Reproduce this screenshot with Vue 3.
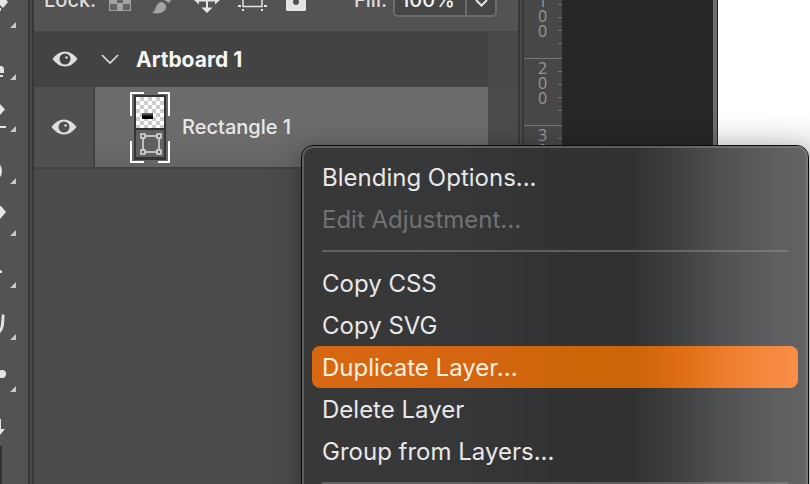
<script setup>
import { ref } from 'vue'

const tools = [
  { name: 'Select', d: 'M-3 26L3 20L8 26L3 32L-1 28ZM-1 32H1V35H-1Z' },
  { name: 'Lasso', d: 'M-2 38H1Q4 38 4 42V45H0V42H-2ZM-2 47H3V49H-2Z' },
  { name: 'Crop', d: 'M-5 29L0 24L5 29.500L0 35ZM-1 46H6V48H-1Z' },
  { name: 'Heal', d: 'M-1 32Q2 34 2 39Q2 44 -1 46V43Q0 39 -1 36Z' },
  { name: 'Eraser', d: 'M-1 22L1 22L6 28L0 35H-1Z' },
  { name: 'Pen', d: 'M-1 33L2 35V37H-1Z' },
  { name: 'Blur', d: 'M2 26L4.500 27L4 37Q3 43 -1 46V42Q1 39 1 36Z' },
  { name: 'Path', d: 'M-2 34A4 4 0 1 1 6 34A4 4 0 1 1 -2 34Z' },
  { name: 'Move', d: 'M-1 27H1V37H5L0 43H-1Z' },
]
const marks = ['100', '200', '300']
const upper = [
  { text: 'Blending Options...' },
  { text: 'Edit Adjustment...', disabled: true },
]
const lower = ['Copy CSS', 'Copy SVG', 'Duplicate Layer...', 'Delete Layer', 'Group from Layers...']
const active = ref('Duplicate Layer...')
const fill = ref('100%')
</script>

<template>
  <main class="app">
    <nav class="tools" aria-label="Tools">
      <button v-for="(t, i) in tools" :key="t.name" class="tool" :aria-label="t.name">
        <svg width="28" height="52" viewBox="0 0 28 52">
          <path :d="t.d" fill="#e4e4e4" />
          <path v-if="i < 8" d="M16 46V52H10Z" fill="#c8c8c8" />
        </svg>
      </button>
      <span class="swatch"></span>
    </nav>
    <div class="divider"></div>

    <section class="panel">
      <header class="lockbar">
        <div class="lockrow">
          <span class="lock-label">Lock:</span>
          <div class="locks">
            <button aria-label="Lock transparent pixels">
              <svg width="28" height="32" viewBox="0 0 28 32">
                <rect x="3" y="5" width="22" height="22" fill="#a3a3a3" />
                <path d="M11 6H17V12H11ZM4 12H11V19H4ZM17 12H24V19H17ZM11 19H17V26H11Z" fill="#a3a3a3" />
                <path d="M4 6H11V12H4ZM17 6H24V12H17ZM11 12H17V19H11ZM4 20H11V26H4ZM17 20H24V26H17Z" fill="#636363" />
              </svg>
            </button>
            <button aria-label="Lock image pixels">
              <svg width="28" height="32" viewBox="0 0 28 32">
                <path d="M2 29Q5 27 6 23Q8 18 12 18Q17 20 16 24Q14 31 2 29Z" fill="#a3a3a3" />
                <path d="M14 16L24 3L28 7L19 19Z" fill="#a3a3a3" />
              </svg>
            </button>
            <button aria-label="Lock position">
              <svg width="28" height="32" viewBox="0 0 28 32">
                <path d="M13 3L18 8H14V15H21V11L26 16L21 20.500V17.500H14V23.500H18.500L13 29L7.500 23.500H12V17.500H5V20.500L0 16L5 11V15H12V8H8Z" fill="#e4e4e4" />
              </svg>
            </button>
            <button aria-label="Lock artboard nesting">
              <svg width="30" height="32" viewBox="0 0 30 32">
                <path d="M5 4V22.500H24V4" fill="none" stroke="#e4e4e4" stroke-width="1.500" />
                <path d="M0 21H3V23H0ZM26 21H29V23H26ZM4 25H6V27H4ZM23 25H25V27H23Z" fill="#e4e4e4" />
              </svg>
            </button>
            <button aria-label="Lock all">
              <svg width="28" height="32" viewBox="0 0 28 32">
                <path d="M6 12V7Q12 0 18 7V12" fill="none" stroke="#e4e4e4" stroke-width="3" />
                <rect x="2" y="11" width="20" height="16" rx="1.500" fill="#e4e4e4" />
                <circle cx="12" cy="18" r="3" fill="#535353" />
              </svg>
            </button>
          </div>
          <label class="fill-label" for="fill">Fill:</label>
          <div class="combo">
            <input id="fill" v-model="fill" />
            <button aria-label="Fill options">
              <svg width="28" height="29" viewBox="0 0 28 29">
                <path d="M9 14L14.500 19.500L20 14" fill="none" stroke="#e4e4e4" stroke-width="2" />
              </svg>
            </button>
          </div>
        </div>
      </header>

      <div class="layers">
        <div class="layer group">
          <button class="eye" aria-label="Toggle Artboard 1">
            <svg width="26" height="16" viewBox="0 0 26 16">
              <path d="M0.500 8Q6 0.500 13 0.500Q20 0.500 25.500 8Q20 15.500 13 15.500Q6 15.500 0.500 8Z" fill="#dedede" />
              <circle cx="13" cy="8" r="5.500" fill="#434343" />
              <circle cx="14.500" cy="6.500" r="1.200" fill="#dedede" />
            </svg>
          </button>
          <div class="body">
            <button class="chevron" aria-label="Collapse">
              <svg width="18" height="12" viewBox="0 0 18 12">
                <path d="M1 2L9 10L17 2" fill="none" stroke="#dedede" stroke-width="1.600" />
              </svg>
            </button>
            <strong>Artboard 1</strong>
          </div>
        </div>
        <div class="layer shape">
          <button class="eye" aria-label="Toggle Rectangle 1">
            <svg width="26" height="16" viewBox="0 0 26 16">
              <path d="M0.500 8Q6 0.500 13 0.500Q20 0.500 25.500 8Q20 15.500 13 15.500Q6 15.500 0.500 8Z" fill="#dedede" />
              <circle cx="13" cy="8" r="5.500" fill="#505050" />
              <circle cx="14.500" cy="6.500" r="1.200" fill="#dedede" />
            </svg>
          </button>
          <div class="body selected">
            <svg width="40" height="72" viewBox="0 0 40 72">
              <defs>
                <pattern id="check" x="6" y="6" width="8" height="8" patternUnits="userSpaceOnUse">
                  <rect width="8" height="8" fill="#fff" />
                  <path d="M4 0H8V4H4ZM0 4H4V8H0Z" fill="#ccc" />
                </pattern>
                <linearGradient id="bar" x2="0" y2="1">
                  <stop offset="0" stop-color="#777" />
                  <stop offset=".6" stop-color="#000" />
                </linearGradient>
              </defs>
              <rect x="4" y="4" width="32" height="65" fill="#333" />
              <rect x="6" y="6" width="28" height="31" fill="url(#check)" />
              <rect x="12" y="22" width="11" height="6" fill="url(#bar)" />
              <rect x="6" y="39" width="28" height="27" fill="#606060" />
              <path d="M13 45H29M13 61H29M13 45V60M29 45V60" stroke="#ddd" stroke-width="1.500" />
              <path d="M11 43H15V47H11ZM27 43H31V47H27ZM11 59H15V63H11ZM27 59H31V63H27Z" fill="#606060" stroke="#ddd" stroke-width="1.500" />
              <path d="M1 25V2H14M28 2H39V25M1 50V71H14M28 71H39V50" fill="none" stroke="#fff" stroke-width="2" />
            </svg>
            <span>Rectangle 1</span>
          </div>
        </div>
      </div>
    </section>
    <div class="divider"></div>

    <aside class="ruler" aria-label="Ruler">
      <div v-for="m in marks" :key="m" class="mark">
        <div class="digits"><span v-for="(n, i) in m" :key="i">{{ n }}</span></div>
        <div class="ticks"><i></i><i></i><i></i><i></i></div>
      </div>
    </aside>
    <div class="canvas"></div>
    <div class="page"></div>

    <div class="menu" role="menu">
      <button v-for="m in upper" :key="m.text" role="menuitem" :disabled="m.disabled">{{ m.text }}</button>
      <hr />
      <button v-for="m in lower" :key="m" role="menuitem" :class="{ active: m === active }" @mouseenter="active = m">{{ m }}</button>
      <hr />
    </div>
  </main>
</template>

<style>
body { margin: 0; }
</style>

<style scoped>
* { box-sizing: border-box; }
.app {
  position: relative;
  display: flex;
  height: 100vh;
  overflow: hidden;
  background: #fff;
  color: #e8e8e8;
  font-family: Inter, "Liberation Sans", sans-serif;
  font-size: 20px;
}
button {
  padding: 0;
  border: 0;
  background: none;
  color: inherit;
  font: inherit;
}
svg { display: block; flex: none; }
.tools {
  flex: none;
  width: 28px;
  margin-top: -24px;
  background: #535353;
}
.tool { display: block; height: 52px; }
.swatch {
  display: block;
  width: 2px;
  height: 48px;
  margin-top: 2px;
  background: #303030;
}
.divider {
  flex: none;
  width: 6px;
  background: #4b4b4b;
  border: solid #373737;
  border-width: 0 2px;
}
.panel {
  flex: none;
  width: 484px;
  background: #4b4b4b;
  font-weight: 500;
}
.lockbar {
  height: 32px;
  background: #535353;
  border-bottom: 1px solid #464646;
}
.lockrow {
  display: flex;
  align-items: center;
  height: 32px;
  padding: 0 21px 0 10px;
  transform: translateY(-16px);
  color: #dcdcdc;
}
.lock-label { width: 62px; }
.locks { display: flex; gap: 16px; }
.fill-label { margin-left: auto; margin-right: 6px; }
.combo {
  display: flex;
  width: 104px;
  height: 33px;
  border: 2px solid #6c6c6c;
  border-radius: 5px;
  background: #464646;
}
.combo input {
  flex: 1;
  min-width: 0;
  padding: 0 0 0 6px;
  border: 0;
  border-right: 2px solid #6c6c6c;
  background: none;
  color: #f4f4f4;
  font: inherit;
}
.layers { border-bottom: 2px solid #424242; }
.layer {
  display: flex;
  padding-right: 30px;
}
.eye {
  display: flex;
  align-items: center;
  justify-content: center;
  width: 61px;
}
.body {
  display: flex;
  flex: 1;
  align-items: center;
}
.group {
  height: 55px;
  padding-bottom: 1px;
  background: linear-gradient(90deg, #434343 454px, #494949 0);
}
.group .body { gap: 17px; padding-left: 6px; }
.group strong { color: #f6f6f6; font-size: 21px; }
.shape { height: 80px; }
.shape .eye {
  background: #505050;
  border-right: 2px solid #424242;
}
.selected {
  gap: 12px;
  padding-left: 35px;
  background: linear-gradient(#6b6b6b 60%, #646464);
}
.ruler {
  flex: none;
  width: 38px;
  margin-top: -8px;
  background: #474747;
  color: #989898;
  font-family: "Open Sans", "Liberation Sans", sans-serif;
  font-size: 16px;
  line-height: 15px;
}
.mark {
  display: flex;
  justify-content: space-between;
  height: 67px;
  padding-left: 14px;
  border-bottom: 1px solid #777;
}
.digits { display: flex; flex-direction: column; padding-top: 2px; }
.ticks {
  display: flex;
  flex-direction: column;
  gap: 12px;
  padding-top: 12px;
}
.ticks i {
  width: 4px;
  height: 1px;
  background: #777;
}
.canvas {
  flex: none;
  width: 155px;
  background: #262626;
  border-right: 4px solid #6c6c6c;
}
.page {
  flex: 1;
  border-left: 1px solid #222;
  background: linear-gradient(#fff 115px, #eee 146px);
}
.menu {
  position: absolute;
  top: 145px;
  left: 301px;
  right: 1px;
  display: flex;
  flex-direction: column;
  padding: 8px 8px 12px;
  border: 1px solid #0c0c0c;
  border-radius: 12px;
  background:
    linear-gradient(90deg, #383838, #363738 30%, #313132 55%, #323233 66%, #3d3f40 74%, #505152 83%, #5e5f60 94%, #636363) padding-box;
  box-shadow: inset 0 0 0 2px rgba(145, 145, 140, .45), 0 6px 28px rgba(0, 0, 0, .35);
  font-size: 24px;
}
.menu button {
  height: 42px;
  margin: 0 2px;
  padding: 0 10px;
  border-radius: 8px;
  text-align: left;
}
.menu button:first-child { margin-top: 2px; }
.menu button:disabled { color: #717273; }
.menu .active {
  background: linear-gradient(90deg, #d86711, #d46511 35%, #cb6508 55%, #cd650a 67%, #df6d15 76%, #f08132 87%, #f88f48);
  color: #fff0e0;
}
.menu hr {
  width: calc(100% - 24px);
  height: 2px;
  margin: 10px 12px;
  border: 0;
  background: rgba(160, 160, 160, .4);
}
</style>
